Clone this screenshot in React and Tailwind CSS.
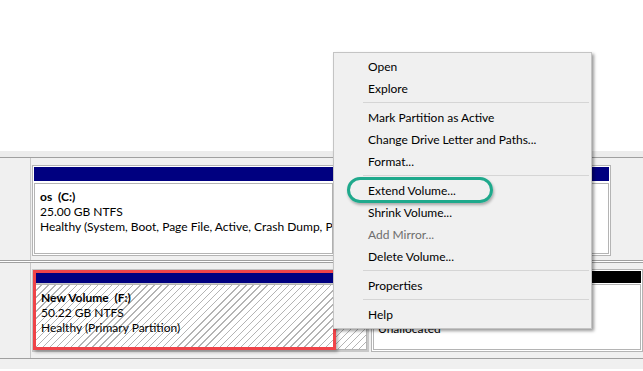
import React from "react";

const hatch =
  "bg-[repeating-linear-gradient(135deg,#ffffff_0px,#ffffff_4px,#b4b4b4_4px,#b4b4b4_5px)]";

function MenuItem({ children, disabled }) {
  return (
    <div
      className={`h-[22px] flex items-center pl-[34px] ${
        disabled ? "text-[#6d6d6d]" : "text-black"
      }`}
    >
      {children}
    </div>
  );
}

function Sep() {
  return (
    <div className="h-[7px] flex items-center pl-[29px] pr-[2px]">
      <div className="h-px w-full bg-[#d5d5d5]" />
    </div>
  );
}

export default function App() {
  return (
    <div className="relative w-[643px] h-[371px] overflow-hidden bg-white font-['Lato',sans-serif] text-[12px] leading-[15px] text-black">
      {/* top white list area */}
      <div className="h-[151px] bg-white" />
      <div className="h-[6px] bg-[#ececec]" />
      <div className="h-px bg-[#a0a0a0]" />

      {/* Disk row 1 */}
      <div className="flex h-[103px] bg-[#f0f0f0] border-b border-[#a0a0a0]">
        <div className="w-[31px] border-r border-[#c8c8c8]" />
        <div className="flex-1 flex pt-[7px] pb-[4px] pl-[1px] gap-[2px]">
          <div className="w-[303px] flex flex-col bg-white border border-[#b4b4b4] p-[1px]">
            <div className="h-[14px] bg-[#000080]" />
            <div className="flex-1 mt-[2px] border border-[#b4b4b4] bg-white pl-[5px] pt-[5px] whitespace-nowrap overflow-hidden">
              <div className="font-bold">os&nbsp; (C:)</div>
              <div>25.00 GB NTFS</div>
              <div>Healthy (System, Boot, Page File, Active, Crash Dump, Primary Partition)</div>
            </div>
          </div>
          <div className="w-[274px] flex flex-col bg-white border border-[#b4b4b4] p-[1px]">
            <div className="h-[14px] bg-[#000080]" />
            <div className="flex-1 mt-[2px] border border-[#b4b4b4] bg-white" />
          </div>
        </div>
      </div>

      {/* Disk row 2 */}
      <div className="flex h-[97px] bg-[#f0f0f0] border-t border-[#a0a0a0] mt-[1px] border-b">
        <div className="w-[31px] border-r border-[#c8c8c8]" />
        <div className="flex-1 flex pt-[6px] pb-[6px] pl-[1px] gap-[2px]">
          <div className="w-[337px] flex flex-col bg-[#c8c8c8] p-[2px]">
            <div className="h-[12px] bg-[#000080]" />
            <div className={`flex-1 mt-[1px] border border-[#b4b4b4] ${hatch} pl-[6px] pt-[5px] whitespace-nowrap overflow-hidden`}>
              <div className="font-bold">New Volume&nbsp; (F:)</div>
              <div>50.22 GB NTFS</div>
              <div>Healthy (Primary Partition)</div>
            </div>
          </div>
          <div className="flex-1 flex flex-col bg-white border border-[#b4b4b4] p-[1px]">
            <div className="h-[12px] bg-black" />
            <div className="flex-1 mt-[1px] border border-[#b4b4b4] bg-white pl-[4px] pt-[6px] whitespace-nowrap overflow-hidden">
              <div className="h-[15px]" />
              <div>50.00 GB</div>
              <div>Unallocated</div>
            </div>
          </div>
        </div>
      </div>
      <div className="h-[10px] bg-[#f0f0f0]" />

      {/* red annotation */}
      <div className="absolute left-[33px] top-[270px] w-[303px] h-[80px] border-[3px] border-[#ef4449] shadow-[2px_2px_3px_rgba(0,0,0,0.3)]" />

      {/* context menu */}
      <div className="absolute left-[333px] top-[52px] w-[259px] bg-[#f0f0f0] border border-[#c4c4c4] pt-[2px] pb-[3px] shadow-[2px_2px_3px_rgba(0,0,0,0.4)]">
        <MenuItem>Open</MenuItem>
        <MenuItem>Explore</MenuItem>
        <Sep />
        <MenuItem>Mark Partition as Active</MenuItem>
        <MenuItem>Change Drive Letter and Paths...</MenuItem>
        <MenuItem>Format...</MenuItem>
        <Sep />
        <MenuItem>Extend Volume...</MenuItem>
        <MenuItem>Shrink Volume...</MenuItem>
        <MenuItem disabled>Add Mirror...</MenuItem>
        <MenuItem>Delete Volume...</MenuItem>
        <Sep />
        <MenuItem>Properties</MenuItem>
        <Sep />
        <MenuItem>Help</MenuItem>
      </div>

      {/* green highlight ellipse */}
      <div className="absolute left-[347px] top-[177px] w-[146px] h-[26px] rounded-full border-[3px] border-[#1fa98c] shadow-[1px_2px_3px_rgba(0,0,0,0.3)]" />
    </div>
  );
}
